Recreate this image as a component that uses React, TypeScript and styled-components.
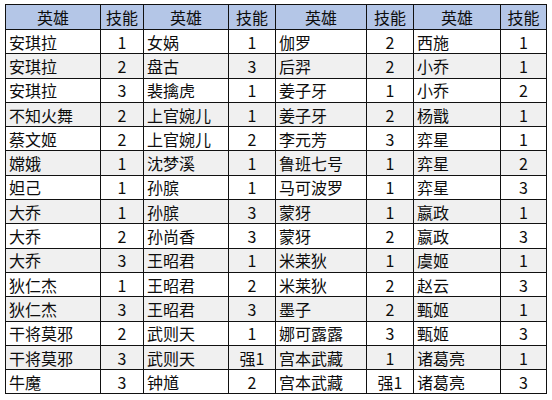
import styled, { createGlobalStyle } from "styled-components";

type Entry = [string, string];

const rows: Entry[][] = [
  [["安琪拉", "1"], ["女娲", "1"], ["伽罗", "2"], ["西施", "1"]],
  [["安琪拉", "2"], ["盘古", "3"], ["后羿", "2"], ["小乔", "1"]],
  [["安琪拉", "3"], ["裴擒虎", "1"], ["姜子牙", "1"], ["小乔", "2"]],
  [["不知火舞", "2"], ["上官婉儿", "1"], ["姜子牙", "2"], ["杨戬", "1"]],
  [["蔡文姬", "2"], ["上官婉儿", "2"], ["李元芳", "3"], ["弈星", "1"]],
  [["嫦娥", "1"], ["沈梦溪", "1"], ["鲁班七号", "1"], ["弈星", "2"]],
  [["妲己", "1"], ["孙膑", "1"], ["马可波罗", "1"], ["弈星", "3"]],
  [["大乔", "1"], ["孙膑", "3"], ["蒙犽", "1"], ["嬴政", "1"]],
  [["大乔", "2"], ["孙尚香", "3"], ["蒙犽", "2"], ["嬴政", "3"]],
  [["大乔", "3"], ["王昭君", "1"], ["米莱狄", "1"], ["虞姬", "1"]],
  [["狄仁杰", "1"], ["王昭君", "2"], ["米莱狄", "2"], ["赵云", "3"]],
  [["狄仁杰", "3"], ["王昭君", "3"], ["墨子", "2"], ["甄姬", "1"]],
  [["干将莫邪", "2"], ["武则天", "1"], ["娜可露露", "3"], ["甄姬", "3"]],
  [["干将莫邪", "3"], ["武则天", "强1"], ["宫本武藏", "1"], ["诸葛亮", "1"]],
  [["牛魔", "3"], ["钟馗", "2"], ["宫本武藏", "强1"], ["诸葛亮", "3"]],
];

const widths = [95, 43, 85, 47, 91, 47, 87, 46];

const App = () => {
  return (
    <>
      <GlobalStyle />
      <Page>
        <Sheet>
          <colgroup>
            {widths.map((w, i) => (
              <col key={i} style={{ width: w }} />
            ))}
          </colgroup>
          <thead>
            <tr>
              {rows[0].map((_, i) => [
                <HeadCell key={`h${i}`}>英雄</HeadCell>,
                <HeadCell key={`s${i}`}>技能</HeadCell>,
              ])}
            </tr>
          </thead>
          <tbody>
            {rows.map((row, r) => (
              <Row key={r} $striped={r % 2 === 1}>
                {row.map(([name, skill], i) => [
                  <NameCell key={`n${i}`}>{name}</NameCell>,
                  <SkillCell key={`k${i}`}>{skill}</SkillCell>,
                ])}
              </Row>
            ))}
          </tbody>
        </Sheet>
      </Page>
    </>
  );
};

const GlobalStyle = createGlobalStyle`
  body {
    margin: 0;
    background: #ffffff;
    font-family: "Noto Sans CJK SC", "Noto Sans", sans-serif;
  }
`;

const Page = styled.div`
  padding: 4px 0 0 5px;
`;

const Sheet = styled.table`
  border-collapse: collapse;
  table-layout: fixed;
  width: 541px;
  border: 1px solid #111111;
  color: #0d0d0d;
  font-size: 16px;
`;

const HeadCell = styled.th`
  height: 24px;
  padding: 0;
  background: #b4c6e7;
  border: 1px solid #111111;
  font-weight: 400;
  text-align: center;
  line-height: 1;
`;

const Row = styled.tr<{ $striped: boolean }>`
  background: ${(p) => (p.$striped ? "#f0f0f0" : "#ffffff")};
`;

const NameCell = styled.td`
  height: 23.3px;
  padding: 0 0 0 3px;
  border: 1px solid #111111;
  text-align: left;
  line-height: 1;
  white-space: nowrap;
`;

const SkillCell = styled.td`
  padding: 0;
  border: 1px solid #111111;
  text-align: center;
  line-height: 1;
  white-space: nowrap;
`;

export default App;
